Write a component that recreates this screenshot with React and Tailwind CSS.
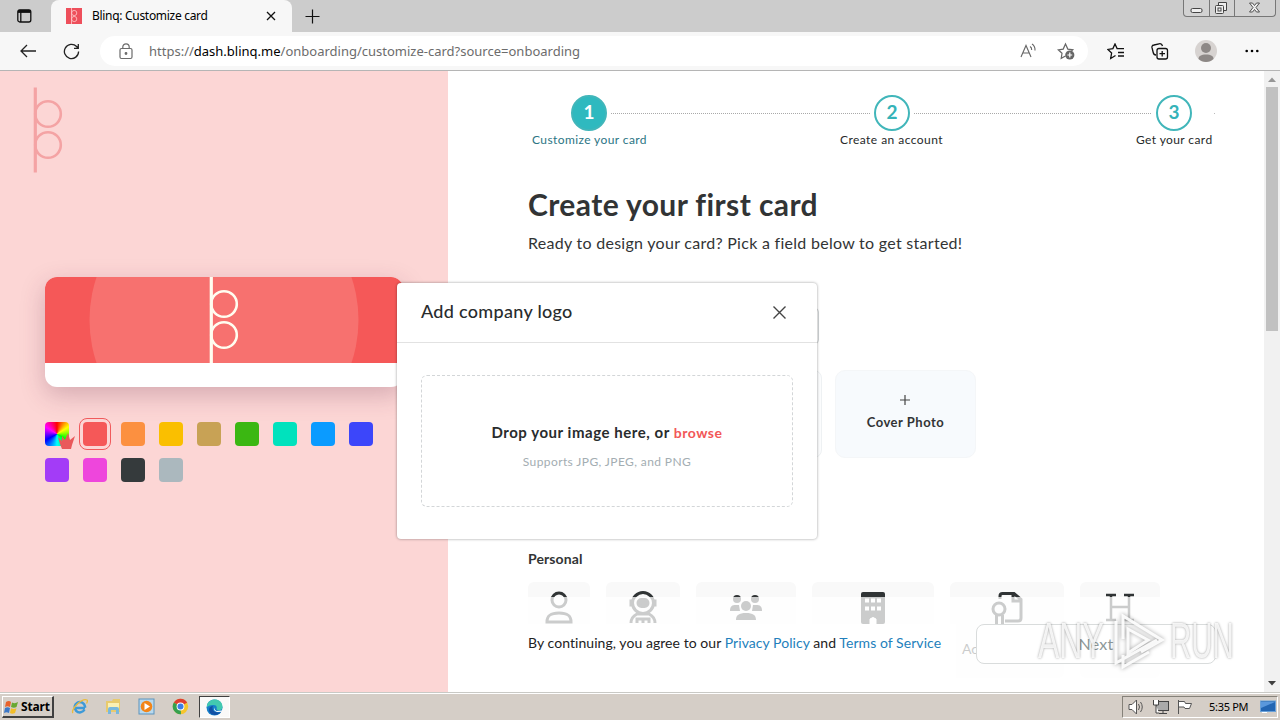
import React from "react";

const SWATCHES = [
  "bg-[#f55858]", "bg-[#fc9040]", "bg-[#fabf00]", "bg-[#c8a255]", "bg-[#3bb712]", "bg-[#00e2bd]", "bg-[#0b9bff]", "bg-[#3c46fa]",
  "bg-[#a33cf7]", "bg-[#ee46dc]", "bg-[#353a3c]", "bg-[#abb8be]",
];

function BlinqMark({ className }) {
  return (
    <svg className={className} width="30" height="86" viewBox="0 0 30 86" fill="none" stroke="currentColor">
      <path d="M2.3 0.5V85.500" strokeWidth="3.2" />
      <circle cx="15" cy="27" r="12.8" strokeWidth="2.6" />
      <circle cx="15" cy="58" r="12.8" strokeWidth="2.6" />
    </svg>
  );
}

function TabStrip() {
  return (
    <div className="relative flex h-8 shrink-0 bg-[#cccccc]">
      <div className="flex w-[51px] items-center pl-[17px]">
        <svg width="15" height="14" viewBox="0 0 15 14" fill="none" stroke="#111" strokeWidth="1.3">
          <rect x="0.8" y="0.8" width="13" height="12.2" rx="2" />
          <path d="M1 2.4h13" strokeWidth="3" />
          <path d="M3.8 3v10" />
        </svg>
      </div>
      <div className="flex w-[241px] items-center rounded-t-lg bg-[#f7f7f7] pl-[15px]">
        <svg width="16" height="16" viewBox="0 0 16 16">
          <rect width="16" height="16" fill="#ee4f5b" />
          <g fill="none" stroke="#fcc" strokeWidth="0.8">
            <path d="M5.5 0v16" /><circle cx="8.2" cy="5" r="2.6" /><circle cx="8.2" cy="11" r="2.6" />
          </g>
        </svg>
        <span className="ml-[10px] w-[171px] whitespace-nowrap text-[12px] leading-4 tracking-[-0.3px] text-black">Blinq: Customize card</span>
        <svg className="ml-[3px]" width="10" height="10" viewBox="0 0 10 10" stroke="#111" strokeWidth="1.3"><path d="M1 1l8 8M9 1l-8 8" /></svg>
      </div>
      <div className="flex items-center pl-[13px]">
        <svg width="15" height="15" viewBox="0 0 15 15" stroke="#111" strokeWidth="1.2"><path d="M7.5 0.5v14M0.5 7.5h14" /></svg>
      </div>
      <div className="ml-auto mr-1 flex h-[17px] w-[93px] rounded-b border border-t-0 border-[#777] bg-[#d2d2d2]">
        <svg width="91" height="16" viewBox="0 0 91 16" fill="none" stroke="#444">
          <path d="M25.5 0v16M50.5 0v16" stroke="#777" />
          <rect x="7" y="8.500" width="11" height="4" rx="1.5" fill="#eee" />
          <path d="M34.500 5V2.500h8v8h-2.500" fill="#eee" /><rect x="31.500" y="5.500" width="8" height="8" rx="1" fill="#eee" /><rect x="34" y="8" width="3" height="3" />
          <path d="M65.500 3h3l2 2.500L72.500 3h3L72 7.500l3.500 4.500h-3l-2-2.500-2 2.500h-3L69 7.500z" fill="#eee" strokeWidth="0.9" />
        </svg>
      </div>
    </div>
  );
}

function Toolbar() {
  return (
    <div className="flex h-[39px] shrink-0 items-center border-b border-[#b5b5b5] bg-[#f7f7f7]">
      <svg className="ml-[20px]" width="17" height="14" viewBox="0 0 17 14" fill="none" stroke="#222" strokeWidth="1.3"><path d="M16 7H1M7 1L1 7l6 6" /></svg>
      <svg className="ml-[26px]" width="17" height="17" viewBox="0 0 17 17" fill="none" stroke="#222" strokeWidth="1.3"><path d="M15.600 8.500a7.100 7.100 0 1 1-2-5L15 5M15.300 1v4.300H11" /></svg>
      <div className="ml-[20px] flex h-[30px] w-[988px] items-center rounded-full bg-white">
        <svg className="ml-[19px]" width="14" height="17" viewBox="0 0 14 17" fill="none" stroke="#6b6b6b" strokeWidth="1.2">
          <rect x="1" y="5.500" width="12" height="10" rx="1.500" /><path d="M3.800 5.500V4a3.200 3.200 0 0 1 6.400 0v1.500" /><circle cx="7" cy="10.500" r="0.800" fill="#6b6b6b" />
        </svg>
        <span className="ml-[16px] whitespace-nowrap text-[13px] leading-5 text-[#6c6c6c]">
          https://<span className="text-black">dash.blinq.me</span>/onboarding/customize-card?source=onboarding
        </span>
        <svg className="ml-auto" width="17" height="16" viewBox="0 0 17 16" fill="none" stroke="#666" strokeWidth="1.100"><path d="M1 14L6 2.500 11 14M3 10h6.300M10 3.500c1.400.8 1.800 2 1.700 3.500M12 1c2.300 1.500 3.200 3.500 3 6.500" /></svg>
        <svg className="ml-[20px] mr-[13px]" width="18" height="18" viewBox="0 0 18 18" fill="none" stroke="#666" strokeWidth="1.200">
          <path d="M8.500 14l-4.300 2.300.8-5L1.300 7.800l4.900-.7L8.500 2l2.300 5.100 5 .7-2 2" /><circle cx="12.800" cy="13" r="4.600" fill="#666" stroke="none" /><path d="M12.800 10.600v4.800M10.400 13h4.800" stroke="#fff" />
        </svg>
      </div>
      <svg className="ml-[19px]" width="18" height="17" viewBox="0 0 18 17" fill="none" stroke="#111" strokeWidth="1.300"><path d="M8.500 12.500l-4.800 3 .9-5.500L.9 6.400l5-.8L8 1l2.100 4.600H17M11 9.500h6M11 13h6" /></svg>
      <svg className="ml-[26px]" width="18" height="17" viewBox="0 0 18 17" fill="none" stroke="#111" strokeWidth="1.300"><rect x="6" y="5.500" width="10.500" height="10.500" rx="2" /><path d="M11.200 8v5.500M8.500 10.700h5.500M5 12C3 12 2.500 11 2.200 9.500L1 4.700C.7 3 1.500 2.200 3 2l5-1.200c2-.5 3 .2 3.500 2.200" /></svg>
      <svg className="ml-[26px]" width="22" height="22" viewBox="0 0 22 22"><circle cx="11" cy="11" r="11" fill="#d7d3d1" /><circle cx="11" cy="8" r="5" fill="#8d8886" /><path d="M3.500 19c0-3 2.500-4.500 7.500-4.500s7.500 1.500 7.500 4.500c-4 4-11 4-15 0z" fill="#8d8886" /></svg>
      <svg className="ml-[28px]" width="14" height="4" viewBox="0 0 14 4"><circle cx="1.700" cy="2" r="1.300" /><circle cx="7" cy="2" r="1.300" /><circle cx="12.300" cy="2" r="1.300" /></svg>
    </div>
  );
}

function CardPreview() {
  return (
    <aside className="flex w-[448px] shrink-0 flex-col bg-[#fcd6d5] text-[#f4a3a4]">
      <BlinqMark className="ml-[33px] mt-4" />
      <div className="ml-[45px] mt-[104px] h-[110px] w-[358px] overflow-hidden rounded-xl bg-white shadow-[0_8px_24px_rgba(100,40,70,0.25)]">
        <div className="flex h-[86px] justify-center bg-[#f55858] text-[#fffdf0]">
          <svg width="358" height="86" viewBox="0 0 358 86">
            <circle cx="179" cy="43" r="134.500" fill="#f7716f" />
            <g fill="none" stroke="currentColor">
              <path d="M166.300 0v86" strokeWidth="3.200" /><circle cx="179" cy="27" r="12.800" strokeWidth="2.600" /><circle cx="179" cy="58" r="12.800" strokeWidth="2.600" />
            </g>
          </svg>
        </div>
      </div>
      <div className="ml-[45px] mt-[35px] flex w-[360px] flex-wrap gap-x-[14px] gap-y-3">
        <div className="relative h-6 w-6 rounded bg-[conic-gradient(#f00,#ff0_16%,#0f0_33%,#0ff_50%,#00f_67%,#f0f_84%,#f00)]">
          <svg className="absolute left-[13px] top-[11px]" width="18" height="17" viewBox="0 0 18 17"><path d="M0 4l4 4V3l3 4L10 0l2 7 5-4-3 9-1 4H4L2 11z" fill="#e9595b" /></svg>
        </div>
        {SWATCHES.map((c, i) => (
          <div key={c} className={`h-6 w-6 rounded ${c} ${i === 0 ? "outline outline-[#f05a5c] outline-offset-[3px]" : ""}`} />
        ))}
      </div>
    </aside>
  );
}

function Stepper() {
  const circle = "flex h-9 w-9 shrink-0 items-center justify-center rounded-full border-2 border-[#41b6ba] text-[19px] font-bold";
  const line = "h-px bg-[repeating-linear-gradient(90deg,#a9a9a9_0_1px,transparent_1px_2px)]";
  return (
    <div className="shrink-0 pt-6">
      <div className="flex items-center gap-1 pl-[43px]">
        <div className={`${circle} bg-[#2fb9bf] pb-px text-white`}>1</div>
        <div className={`${line} w-[259px]`} />
        <div className={`${circle} pb-px text-[#35b3b8]`}>2</div>
        <div className={`${line} w-[238px]`} />
        <div className={`${circle} pb-px text-[#35b3b8]`}>3</div>
        <div className="ml-[18px] h-px w-px bg-[#bbb]" />
      </div>
      <div className="flex gap-[193px] whitespace-nowrap pl-1 pt-[1px] text-[12px] leading-4 text-[#26292a]">
        <span className="w-[115px] tracking-[0.4px] text-[#2b7584]">Customize your card</span>
        <span className="w-[103px] tracking-[0.45px]">Create an account</span>
        <span className="w-[76px] tracking-[0.4px]">Get your card</span>
      </div>
    </div>
  );
}

const FIELD_ICONS = [
  { w: "w-[62px]", art: <g fill="none" strokeWidth="3"><circle cx="17" cy="10" r="7" /><path d="M5 32c0-7 4-9 12-9s12 2 12 9z" /></g> },
  { w: "w-[74px]", art: <g fill="none" strokeWidth="3"><circle cx="17" cy="13" r="10.500" /><rect x="12" y="9.500" width="10" height="7" rx="3.500" fill="currentColor" /><path d="M5 9.500v7M29 9.500v7" /><path d="M5 33c0-4 2-7 6-9h12c4 2 6 5 6 9M11 33v-4h12v4M17 29v4" /></g> },
  { w: "w-[100px]", art: <g stroke="none" fill="currentColor"><circle cx="8" cy="9" r="4" /><circle cx="26" cy="9" r="4" /><circle cx="17" cy="16" r="5" /><path d="M1 21c0-5 2-6 6-6h3l1 6zM33 21c0-5-2-6-6-6h-3l-1 6zM7 30c0-5 3-7 10-7s10 2 10 7z" /></g> },
  { w: "w-[122px]", art: <g><rect x="5" y="2" width="24" height="32" rx="2" fill="currentColor" stroke="none" /><path d="M9 10.500h4M15 10.500h4M21 10.500h4M9 18.500h4M15 18.500h4M21 18.500h4" stroke="#fff" strokeWidth="4" /><path d="M14 34v-5q3-3 6 0v5" fill="#fff" stroke="#fff" /></g> },
  { w: "w-[114px]", art: <g fill="none" strokeWidth="3"><path d="M10 9V6q0-2.500 2.500-2.500H24l7 6V28q0 3-3 3H15M23 4v7h8" /><circle cx="9" cy="19" r="6" /><path d="M6.500 25v9M12.500 25v9" /></g> },
  { w: "w-[80px]", art: <g fill="none" strokeWidth="2.500"><path d="M8 5v25M26 5v25M8 17h18M3 30h10M21 30h10" /><path d="M3 5h10M21 5h10" /></g> },
];

function Editor() {
  return (
    <main className="relative flex w-[816px] shrink-0 flex-col overflow-hidden bg-white pl-20 text-[#323435]">
      <Stepper />
      <h1 className="mt-[37px] shrink-0 whitespace-nowrap text-[30px] font-bold leading-[38px] tracking-[0.4px]">Create your first card</h1>
      <p className="mt-[10px] shrink-0 whitespace-nowrap text-[16px] leading-5 tracking-[0.28px]">Ready to design your card? Pick a field below to get started!</p>
      <div className="mt-[55px] h-9 w-[291px] shrink-0 rounded border border-[#cfd3d5]" />
      <div className="mt-[26px] flex h-[88px] shrink-0 gap-[13px]">
        <div className="w-[141px] rounded-lg bg-[#f7fafd]" />
        <div className="w-[140px] rounded-lg border border-[#eef1f3] bg-[#fbfcfd]" />
        <div className="flex w-[141px] flex-col items-center rounded-[10px] border border-[#f4f6f8] bg-[#f7fafd] pt-[24px]">
          <svg className="mr-px" width="10" height="10" viewBox="0 0 10 10" stroke="#444" strokeWidth="1.200"><path d="M5 0v10M0 5h10" /></svg>
          <span className="mt-[7px] whitespace-nowrap text-[13px] font-bold leading-5 tracking-[0.5px]">Cover Photo</span>
        </div>
      </div>
      <h2 className="mt-[91px] shrink-0 text-[14px] font-bold leading-5 tracking-[0.1px]">Personal</h2>
      <div className="mt-[13px] flex h-24 shrink-0 gap-4">
        {FIELD_ICONS.map(({ w, art }, i) => (
          <div key={w} className={`flex h-24 shrink-0 flex-col items-center rounded-md bg-[#f9f9f9] pt-[8px] text-[#303435] ${w}`}>
            <svg className="shrink-0" width="34" height="34" viewBox="0 0 34 34" stroke="currentColor">{art}</svg>
            {i === 4 && <span className="mt-[15px] w-[90px] text-[14px] leading-5">Accreditations</span>}
          </div>
        ))}
      </div>
      <h2 className="mt-[9px] shrink-0 text-[14px] font-bold leading-5">General</h2>
      <footer className="absolute bottom-0 left-0 flex h-[95px] w-full flex-col bg-white/75 pt-[27px]">
        <div className="flex">
          <div className="h-[64px] w-[508px] bg-white pl-20 pt-[6px]">
            <span className="whitespace-nowrap text-[14px] leading-5 tracking-[0.06px] text-[#222]">
              By continuing, you agree to our <span className="text-[#237fbc]">Privacy Policy</span> and <span className="text-[#237fbc]">Terms of Service</span>
            </span>
          </div>
          <div className="ml-5 flex h-10 w-[240px] items-center justify-center rounded-lg border border-[#d9dcdc] bg-white pb-px text-[16px] tracking-[0.2px] text-[#8d9898]">Next</div>
        </div>
      </footer>
    </main>
  );
}

function LogoDialog() {
  return (
    <div className="absolute left-[397px] top-[283px] flex h-[256px] w-[420px] flex-col rounded bg-white text-[#292c2d] shadow-[0_0_3px_rgba(0,0,0,0.4)]">
      <div className="flex h-[60px] items-center justify-between border-b border-[#e2e2e2] pl-6 pr-[31px]">
        <span className="whitespace-nowrap pb-[3px] text-[18px] font-medium leading-6 tracking-[0.3px]">Add company logo</span>
        <svg width="13" height="13" viewBox="0 0 13 13" stroke="#444" strokeWidth="1.400"><path d="M0.500 0.500l12 12M12.500 0.500l-12 12" /></svg>
      </div>
      <div className="mx-6 mt-8 flex h-[132px] flex-col items-center rounded-md border border-dashed border-[#d3d6d8] pt-[44px]">
        <p className="whitespace-nowrap text-[15px] font-bold leading-6 tracking-[0.54px]">
          Drop your image here, or <span className="text-[14px] text-[#f25757]">browse</span>
        </p>
        <p className="mt-[9px] whitespace-nowrap text-[12px] leading-4 tracking-[0.4px] text-[#a3adb2]">Supports JPG, JPEG, and PNG</p>
      </div>
    </div>
  );
}

function Watermark() {
  const word = "inline-block origin-left whitespace-nowrap font-['Liberation_Sans'] text-[50px] leading-[50px] text-white/85 [text-shadow:0_0_3px_rgba(0,0,0,0.4)]";
  return (
    <div className="pointer-events-none absolute left-[1038px] top-[608px] flex h-[66px] w-[200px] items-center">
      <div className="w-[68px]"><span className={`${word} scale-x-[0.64]`}>ANY</span></div>
      <svg className="w-[64px] shrink-0 drop-shadow-[0_0_2px_rgba(0,0,0,0.4)]" height="64" viewBox="0 0 64 64" fill="none" stroke="#fff" strokeOpacity="0.9">
        <path d="M17 30V7L56 31 35 43M10 12v42L51 31M17 46v12l26-15M22 20l20 11-20 13z" strokeWidth="3" />
      </svg>
      <div className="w-[64px]"><span className={`${word} scale-x-[0.59]`}>RUN</span></div>
    </div>
  );
}

function Taskbar() {
  return (
    <div className="flex h-7 shrink-0 items-center border-t border-[#c9c9c5] bg-[#d5cec7] shadow-[inset_0_1px_0_#fff]">
      <div className="ml-[2px] mt-[1px] flex h-[22px] w-[52px] items-center border border-b-2 border-r-2 border-b-[#404040] border-l-white border-r-[#404040] border-t-white pl-[1px]">
        <svg width="16" height="16" viewBox="0 0 16 16"><path d="M2 3q3-2 5 0L6 8Q3.500 6.500 1 8z" fill="#e8622c" /><path d="M8 3.500q3 1.500 6-.5l-1.500 5Q10 9.500 7 8z" fill="#68a832" /><path d="M1 9q2.500-1.500 5 0l-1 5Q2.500 12.500 0 14z" fill="#3c78c8" /><path d="M7 9.200q3 1.500 5.500 0L11 14q-3 1.500-5 0z" fill="#f2bd28" /></svg>
        <span className="ml-px pt-px text-[12px] font-bold leading-4 tracking-[-0.15px] text-black">Start</span>
      </div>
      <div className="ml-[17px] flex items-center">
        <svg width="17" height="17" viewBox="0 0 17 17" fill="none"><path d="M14 10H4.500M13.500 11.500A5.200 5.200 0 1 1 14 8.500v1.300" stroke="#3d9ad8" strokeWidth="2.500" /><path d="M2 15C-1 12 11-.5 16 2q1 1-.5 3.500" stroke="#eabb3c" strokeWidth="1.300" /></svg>
        <svg className="ml-[17px]" width="17" height="17" viewBox="0 0 17 17"><path d="M1 3h6l1-2h7v13H1z" fill="#e8ca6d" /><path d="M3 5h11v7H3z" fill="#faf0b4" /><path d="M3 16v-5q0-2 2-2h7q2 0 2 2v5h-3v-4H6v4z" fill="#79b8dd" /></svg>
        <svg className="ml-[16px]" width="17" height="17" viewBox="0 0 17 17"><rect x="1" y="1" width="15" height="15" fill="#b8d9ee" stroke="#5c93bd" /><circle cx="8.500" cy="8.500" r="5.800" fill="#f28518" /><path d="M6.500 5l5.500 3.500L6.500 12z" fill="#fff" /></svg>
        <svg className="ml-[17px]" width="17" height="17" viewBox="0 0 17 17"><circle cx="8.500" cy="8.500" r="7.700" fill="#f6c52c" /><path d="M8.500 8.500L1.800 4.600a7.700 7.700 0 0 1 13.400 0z" fill="#df3e32" /><path d="M1.800 4.600L8.500 8.500 9 16.200A7.700 7.700 0 0 1 1.800 4.600z" fill="#36a04e" /><circle cx="8.500" cy="8.500" r="3.900" fill="#fff" /><circle cx="8.500" cy="8.500" r="3" fill="#3d7de6" /></svg>
      </div>
      <div className="ml-[10px] mt-[1px] flex h-[22px] w-[31px] items-center justify-center border border-l-[#404040] border-t-[#404040] border-white bg-[#faf9f8]">
        <svg width="17" height="17" viewBox="0 0 17 17"><circle cx="8.500" cy="8.500" r="8" fill="#167fc9" /><path d="M1 6C3-1 16-2 16.500 8c0 4-5 4-6 2 .8-1.500.2-4-3-4Q4 5.500 1 8z" fill="#42c9b0" /><path d="M7 7c-2 4 2 8 8 6-4 5-12 3-12-2 0-3 2-4 4-4z" fill="#1250a4" /><path d="M9 7.500q-2 2.500 1.500 4.500l5.500-.5v1.300L11 13Q6 11 9 7.500z" fill="#fff" /></svg>
      </div>
      <div className="ml-auto mr-[2px] mt-[1px] flex h-[22px] w-[156px] items-center border border-l-[#858179] border-t-[#858179] border-white">
        <svg className="ml-[5px]" width="18" height="16" viewBox="0 0 18 16" fill="none" stroke="#555"><path d="M1 5.500h3L8.500 1v14L4 10.500H1z" fill="#fff" /><path d="M10.500 5q2 3 0 6M12.500 3q3.500 5 0 10" /></svg>
        <svg className="ml-[6px]" width="18" height="16" viewBox="0 0 18 16" fill="none" stroke="#444"><rect x="4.500" y="2.500" width="12" height="9" fill="#aaa" /><path d="M7 14.500h8M11 12v2" /><path d="M1.500 1v5h5V1M4 6v8h3" fill="#fff" /></svg>
        <svg className="ml-[6px]" width="17" height="16" viewBox="0 0 17 16" stroke="#555"><path d="M2.500 15V1M2.500 2.500h6l1 2h6l-2 5H9l-1-1.500H2.500" fill="#fff" /></svg>
        <span className="ml-[16px] w-[40px] whitespace-nowrap text-[11px] leading-4 tracking-[-0.3px] text-black">5:35 PM</span>
        <svg className="ml-[11px]" width="16" height="14" viewBox="0 0 16 14"><rect x="0.500" y="1" width="15" height="10.500" fill="#2366b3" stroke="#6ba1d8" /><path d="M1 2h14L1 8z" fill="#5a98dc" /><path d="M2 12.500h5" stroke="#fff" /></svg>
      </div>
    </div>
  );
}

export default function App() {
  return (
    <div className="relative flex h-[720px] w-[1280px] flex-col overflow-hidden font-['Noto_Sans',sans-serif]">
      <TabStrip />
      <Toolbar />
      <div className="flex h-[621px] shrink-0 font-[Lato,sans-serif]">
        <CardPreview />
        <Editor />
        <div className="flex w-4 flex-col items-center bg-[#f1f1f1] py-[6px]">
          <svg width="8" height="5" viewBox="0 0 8 5"><path d="M0 5l4-4.500L8 5z" fill="#969696" /></svg>
          <div className="mt-[5px] h-[244px] w-3 bg-[#c1c1c1]" />
          <svg className="mt-auto" width="8" height="5" viewBox="0 0 8 5"><path d="M0 0h8L4 4.500z" fill="#404040" /></svg>
        </div>
      </div>
      <Taskbar />
      <div className="font-[Lato,sans-serif]"><LogoDialog /></div>
      <Watermark />
    </div>
  );
}
